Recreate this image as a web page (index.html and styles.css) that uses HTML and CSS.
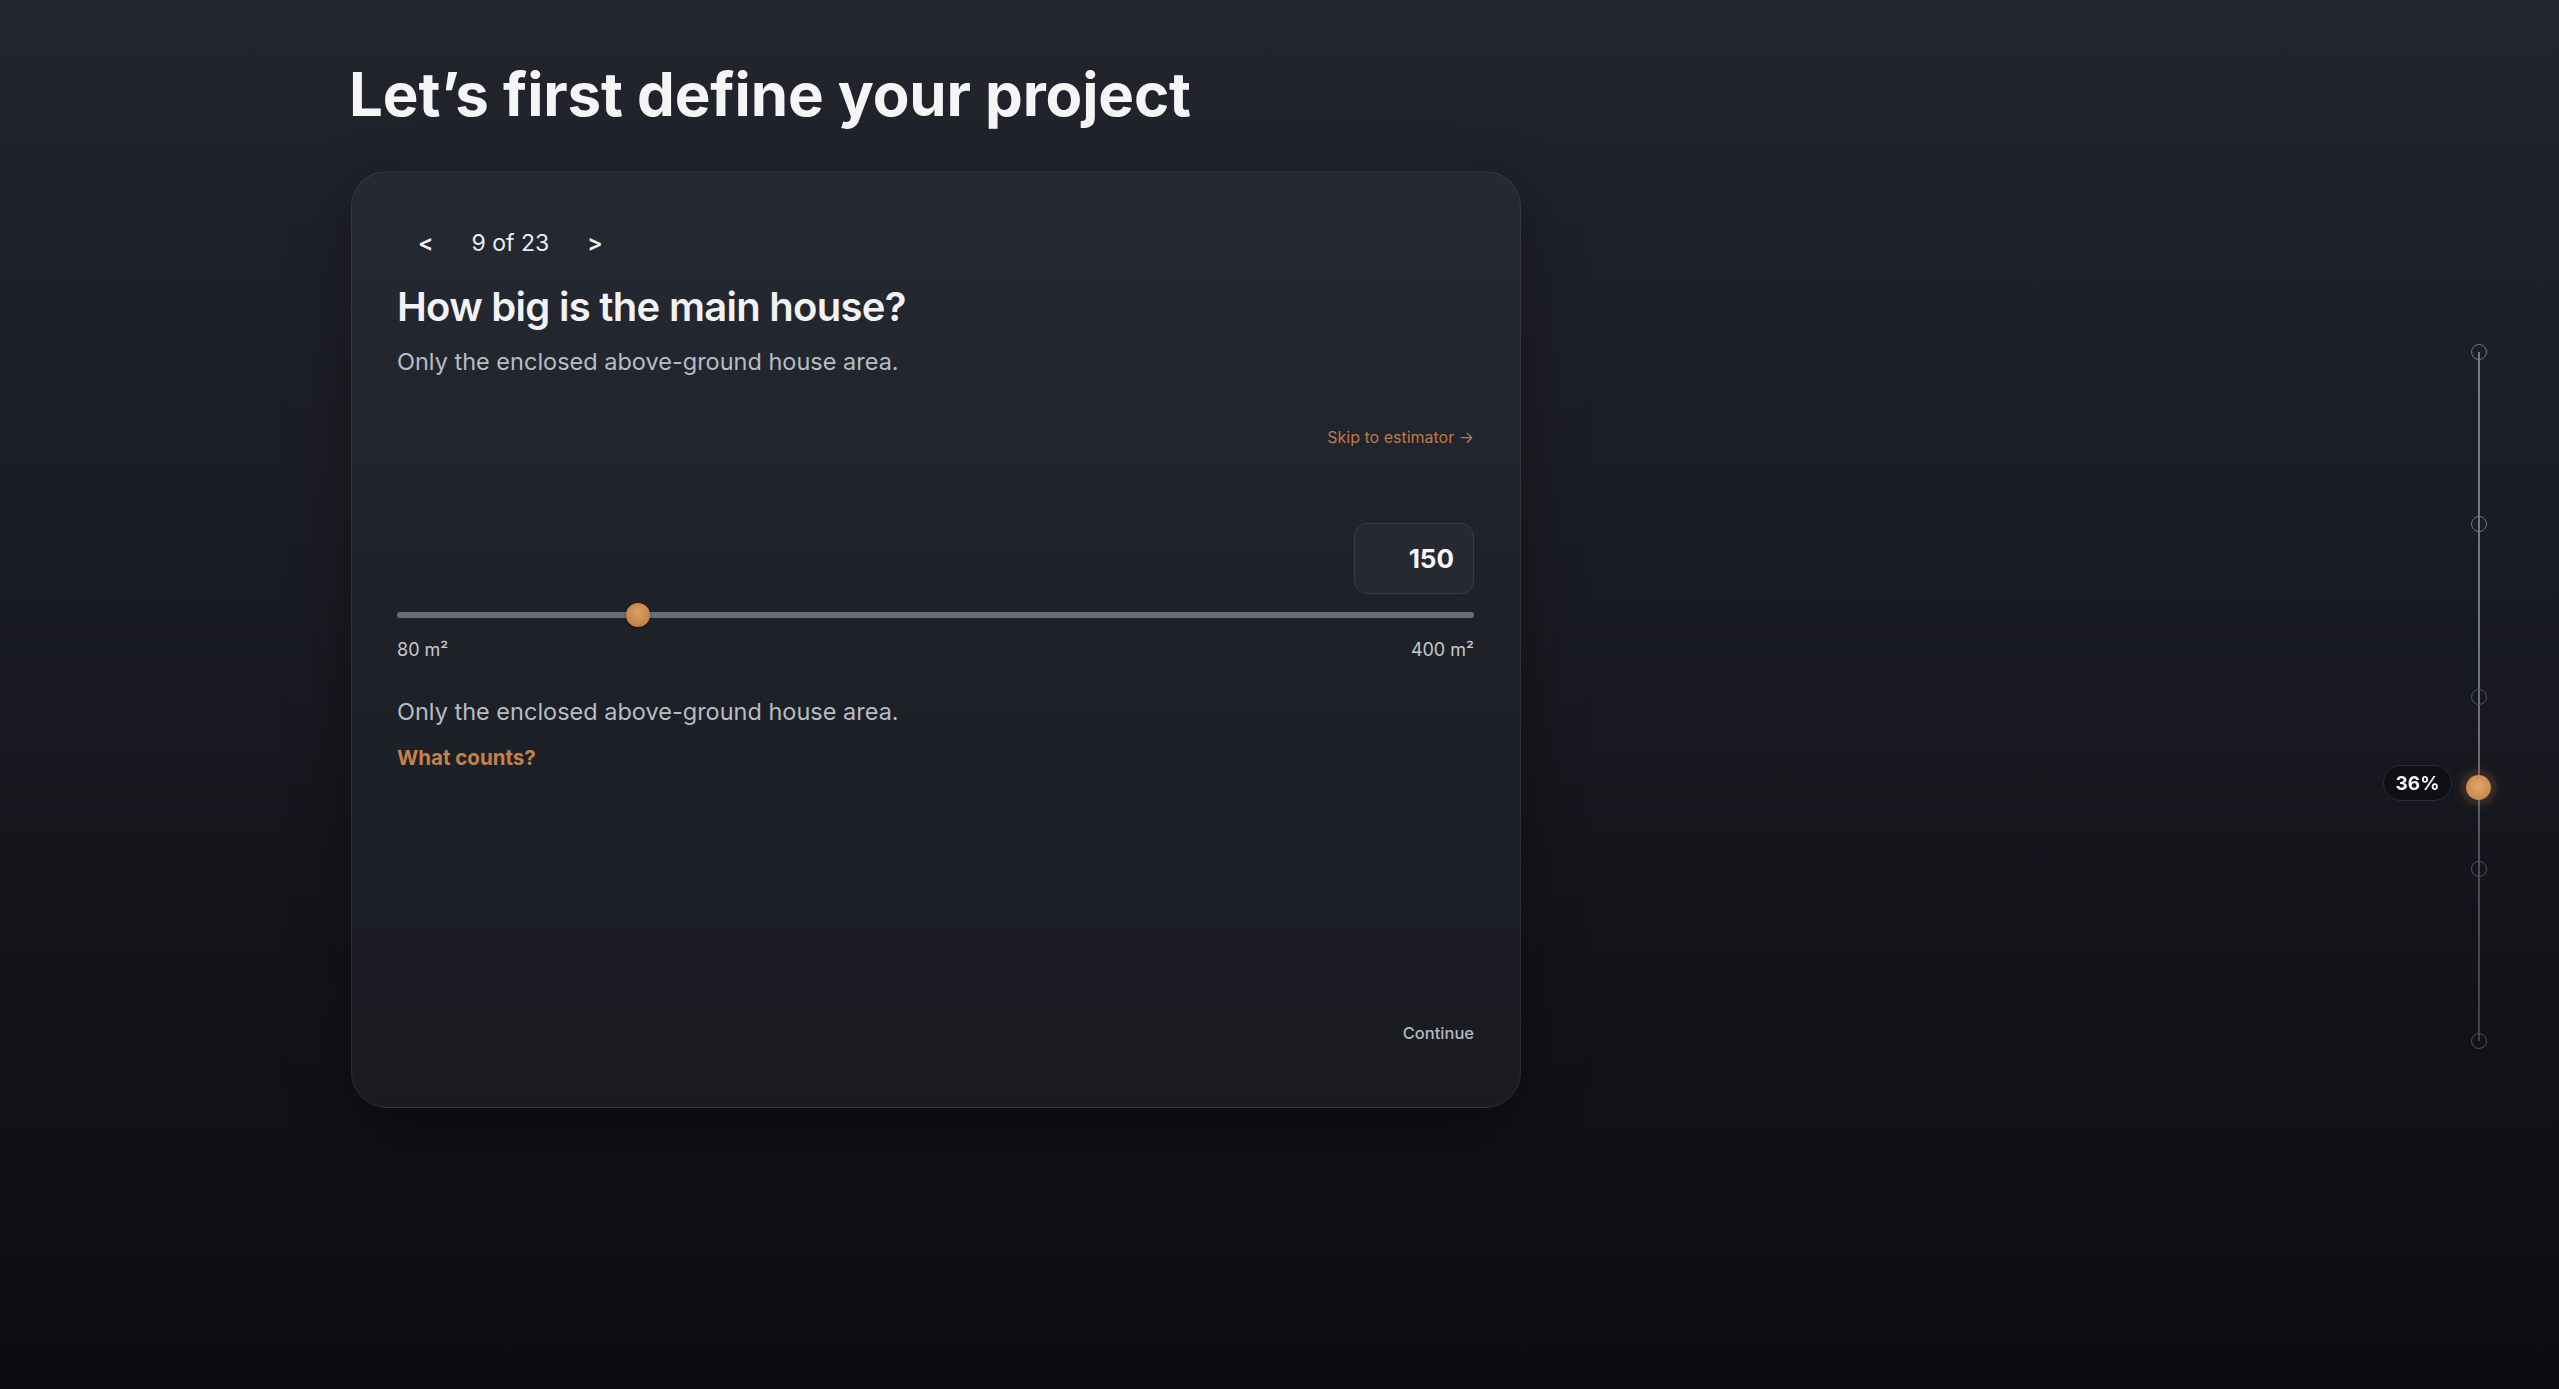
FILE: index.html
```html
<!DOCTYPE html>
<html lang="en">
<head>
<meta charset="utf-8">
<title>Define your project</title>
<link rel="stylesheet" href="styles.css">
</head>
<body>
<main class="page">
  <h1 class="title">Let’s first define your project</h1>
  <section class="card">
    <nav class="pager">
      <button class="pager-btn" type="button">&lt;</button>
      <span class="pager-count">9 of 23</span>
      <button class="pager-btn" type="button">&gt;</button>
    </nav>
    <h2 class="question">How big is the main house?</h2>
    <p class="hint">Only the enclosed above-ground house area.</p>
    <div class="skip-row"><a class="skip" href="#">Skip to estimator →</a></div>
    <div class="value-row"><div class="value-box">150</div></div>
    <div class="slider">
      <div class="track"></div>
      <div class="thumb" style="left:22.4%"></div>
    </div>
    <div class="range-labels"><span>80 m²</span><span>400 m²</span></div>
    <p class="hint hint-second">Only the enclosed above-ground house area.</p>
    <a class="what" href="#">What counts?</a>
    <div class="footer"><button class="continue" type="button">Continue</button></div>
  </section>
</main>
<aside class="rail">
  <div class="rail-line"></div>
  <div class="rail-nodes">
    <span class="node node-done"></span>
    <span class="node node-done"></span>
    <span class="node"></span>
    <span class="node"></span>
    <span class="node"></span>
  </div>
  <div class="rail-current">
    <span class="pct">36%</span>
    <span class="dot"></span>
  </div>
</aside>
</body>
</html>
```
FILE: styles.css
```css
* { box-sizing: border-box; }
html, body { margin: 0; padding: 0; }
body {
  min-height: 1389px;
  background: linear-gradient(180deg, #22252d 0%, #1a1c23 40%, #12141a 70%, #0c0d11 100%);
  font-family: Inter, "Noto Sans", "Liberation Sans", sans-serif;
  color: #f2f2f3;
}
.page {
  padding: 64px 0 0 351px;
  display: flex;
  flex-direction: column;
  align-items: flex-start;
}
.title {
  margin: 0 0 47px -2px;
  font-size: 60px;
  line-height: 1;
  font-weight: 700;
  letter-spacing: -0.002em;
  color: #f5f5f5;
}
.card {
  width: 1170px;
  height: 937px;
  border-radius: 36px;
  border: 1px solid rgba(255, 255, 255, 0.08);
  background: linear-gradient(180deg, #252932 0%, #1f2229 45%, #191b21 100%);
  box-shadow: 0 20px 60px rgba(0, 0, 0, 0.35);
  padding: 60px 46px 66px 45px;
  display: flex;
  flex-direction: column;
}
.pager {
  display: flex;
  align-items: center;
  gap: 38px;
  padding-left: 21px;
  height: 23px;
}
.pager-btn {
  background: none;
  border: 0;
  padding: 0;
  color: #f0f0f2;
  font-family: inherit;
  font-size: 23px;
  font-weight: 600;
  line-height: 1;
}
.pager-count {
  font-size: 23px;
  line-height: 1;
  color: #ececee;
}
.question {
  margin: 32px 0 0 0;
  font-size: 40px;
  line-height: 1;
  font-weight: 600;
  letter-spacing: -0.018em;
  color: #f2f2f4;
}
.hint {
  margin: 23px 0 0 0;
  font-size: 23.5px;
  line-height: 1;
  color: #b8bcc5;
}
.skip-row {
  margin-top: 55px;
  display: flex;
  justify-content: flex-end;
}
.skip {
  font-size: 16px;
  line-height: 1;
  color: #bb7c48;
  text-decoration: none;
}
.value-row {
  margin-top: 78px;
  display: flex;
  justify-content: flex-end;
}
.value-box {
  width: 120px;
  height: 71px;
  border-radius: 13px;
  background: #262931;
  border: 1px solid #363a43;
  display: flex;
  align-items: center;
  justify-content: flex-end;
  padding-right: 19px;
  font-size: 26px;
  font-weight: 700;
  color: #f7f7f7;
}
.slider {
  margin-top: 9px;
  position: relative;
  height: 24px;
  display: flex;
  align-items: center;
}
.track {
  width: 100%;
  height: 6px;
  border-radius: 3px;
  background: #6b6e77;
}
.thumb {
  position: absolute;
  top: 0;
  width: 24px;
  height: 24px;
  border-radius: 50%;
  transform: translateX(-50%);
  background: radial-gradient(circle at 50% 40%, #dc9f63 0%, #c8874c 60%, #b3743f 100%);
  box-shadow: 0 1px 3px rgba(0, 0, 0, 0.4);
}
.range-labels {
  margin-top: 14px;
  display: flex;
  justify-content: space-between;
  font-size: 18px;
  line-height: 1;
  color: #c6c9d0;
}
.hint-second {
  margin-top: 41px;
}
.what {
  margin-top: 25px;
  font-size: 20.5px;
  line-height: 1;
  font-weight: 700;
  color: #c4824a;
  text-decoration: none;
  align-self: flex-start;
}
.footer {
  margin-top: auto;
  display: flex;
  justify-content: flex-end;
}
.continue {
  background: none;
  border: 0;
  padding: 0;
  font-family: inherit;
  font-size: 16.5px;
  line-height: 1;
  font-weight: 500;
  color: #b4b8c0;
}
.rail {
  position: fixed;
  left: 2471px;
  top: 344px;
  width: 16px;
  height: 705px;
}
.rail-line {
  position: absolute;
  left: 7px;
  top: 8px;
  bottom: 8px;
  width: 2px;
  background: linear-gradient(180deg, #777b86 0%, #6c7079 55%, #4a4d56 75%, #3f424a 100%);
}
.rail-nodes {
  position: relative;
  height: 100%;
  display: flex;
  flex-direction: column;
  justify-content: space-between;
}
.node {
  display: block;
  width: 16px;
  height: 16px;
  border-radius: 50%;
  border: 1.5px solid #50535c;
}
.node-done {
  border-color: #72767f;
}
.rail-current {
  position: absolute;
  top: 443px;
  right: -4px;
  height: 0;
  display: flex;
  align-items: center;
  gap: 14px;
}
.pct {
  height: 36px;
  width: 69px;
  margin-top: -8px;
  border-radius: 18px;
  background: #0e1015;
  border: 1px solid #2a2d35;
  display: flex;
  align-items: center;
  justify-content: center;
  font-size: 19px;
  font-weight: 700;
  color: #f5f5f5;
}
.dot {
  width: 25px;
  height: 25px;
  border-radius: 50%;
  background: radial-gradient(circle at 50% 45%, #e2a66c 0%, #cf8f54 55%, #b97a43 100%);
  box-shadow: 0 0 0 6px rgba(200, 130, 70, 0.08), 0 0 16px rgba(210, 140, 80, 0.35);
}
```
